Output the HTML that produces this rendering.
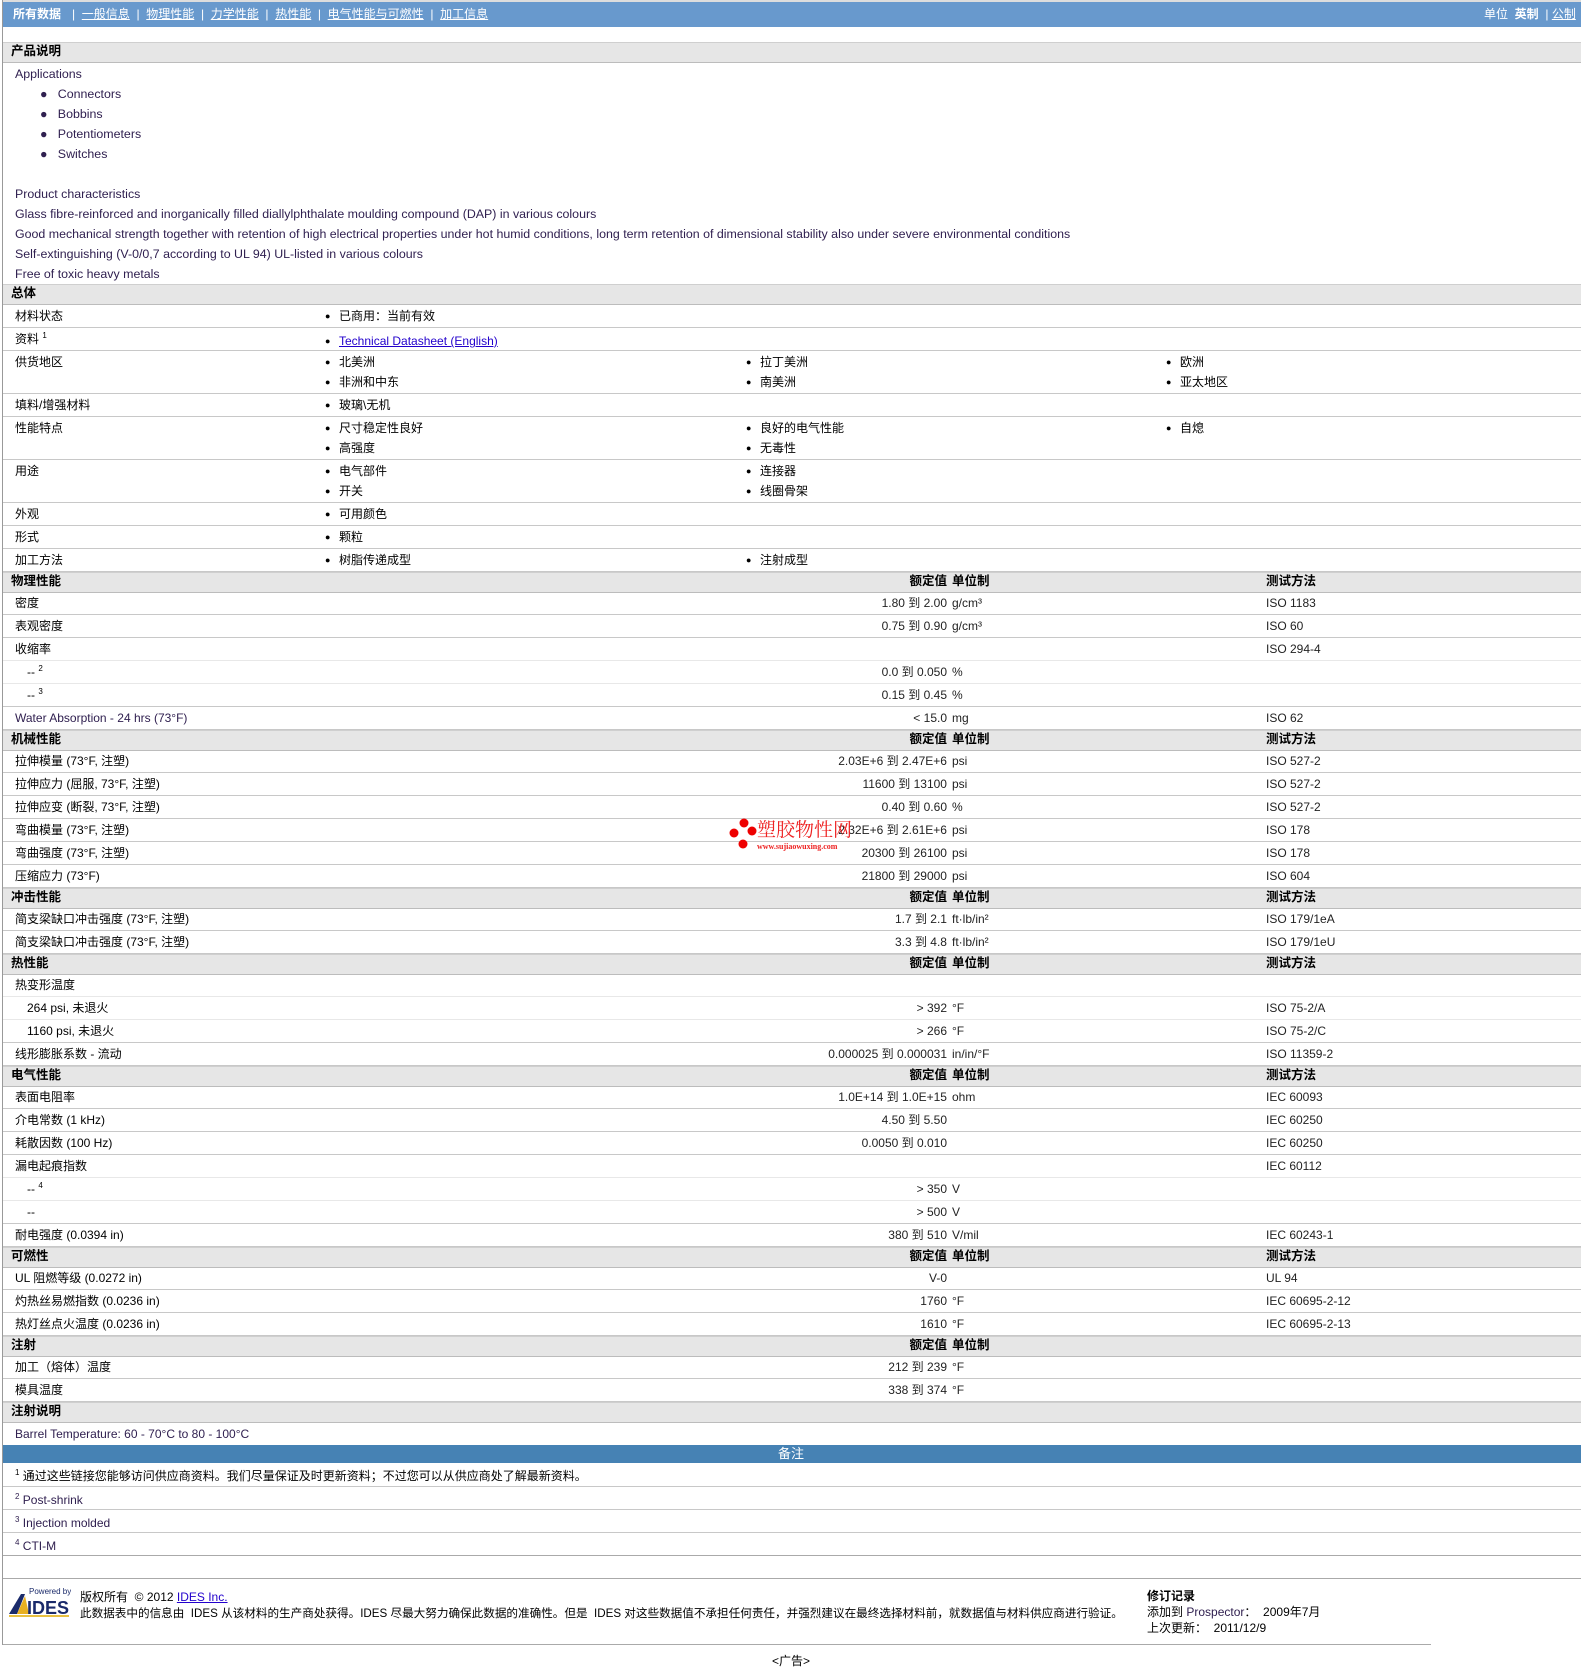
<!DOCTYPE html>
<html><head><meta charset="utf-8"><style>
body{margin:0;width:1581px;height:1671px;background:#fff;position:relative;overflow:hidden;font-family:"Liberation Sans","Noto Sans CJK SC",sans-serif;font-size:12px;line-height:15px;color:#000}
div,span{position:absolute;white-space:nowrap;line-height:15px}
.r{left:3px;right:0;border-bottom:1px solid #c8c8c8}
.s{border-bottom-color:#e8e8e8}
.h{left:3px;right:0;height:19px;background:#e6e6e6;border-top:1px solid #cfcfcf;border-bottom:1px solid #bcbcbc;font-weight:bold;font-size:12.5px}
.h span{top:1px}
.l{left:12px;top:4px}
.i{left:24px;top:4px}
.v{right:634px;top:4px;color:#222}
.u{left:949px;top:4px;color:#222}
.m{left:1263px;top:4px;color:#222}
.b2,.b3,.b4{font-size:9px}
.b2{left:322px}.t2{left:336px}.b3{left:743px}.t3{left:757px}.b4{left:1163px}.t4{left:1177px}
.p{color:#302050}
.d{font-size:12.4px}
sup{font-size:8px;line-height:0}
a{color:#2200cc}
</style></head><body>
<div style="left:3px;top:0;width:1578px;height:2px;background:#ddd"></div>
<div style="left:3px;top:2px;right:0;height:25px;background:#6899cd;color:#fff;font-size:12px">
<span style="left:10px;top:5px;font-weight:bold">所有数据</span>
<span style="left:69px;top:5px">|&nbsp; <u>一般信息</u> &nbsp;| &nbsp;<u>物理性能</u> &nbsp;| &nbsp;<u>力学性能</u> &nbsp;| &nbsp;<u>热性能</u> &nbsp;| &nbsp;<u>电气性能与可燃性</u> &nbsp;| &nbsp;<u>加工信息</u></span>
<span style="left:1481px;top:5px">单位 &nbsp;<b>英制</b> &nbsp;| <u>公制</u></span></div>
<div style="left:2px;top:0;width:1px;height:1645px;background:#999"></div>

<div class="h" style="top:42px"><span style="left:8px">产品说明</span></div>
<div class="p d" style="left:15px;top:67px">Applications</div>
<div class="p d" style="left:40px;top:87px">●&nbsp;&nbsp; Connectors</div>
<div class="p d" style="left:40px;top:107px">●&nbsp;&nbsp; Bobbins</div>
<div class="p d" style="left:40px;top:127px">●&nbsp;&nbsp; Potentiometers</div>
<div class="p d" style="left:40px;top:147px">●&nbsp;&nbsp; Switches</div>
<div class="p d" style="left:15px;top:187px">Product characteristics</div>
<div class="p d" style="left:15px;top:207px">Glass fibre-reinforced and inorganically filled diallylphthalate moulding compound (DAP) in various colours</div>
<div class="p d" style="left:15px;top:227px">Good mechanical strength together with retention of high electrical properties under hot humid conditions, long term retention of dimensional stability also under severe environmental conditions</div>
<div class="p d" style="left:15px;top:247px">Self-extinguishing (V-0/0,7 according to UL 94) UL-listed in various colours</div>
<div class="p d" style="left:15px;top:267px">Free of toxic heavy metals</div>

<div class="h" style="top:284px"><span style="left:8px">总体</span></div>
<div class="r" style="top:305px;height:22px"><span class="l">材料状态</span><span class="b2" style="top:4px">●</span><span class="t2" style="top:4px">已商用：当前有效</span></div>
<div class="r" style="top:328px;height:22px"><span class="l">资料 <sup>1</sup></span><span class="b2" style="top:6px">●</span><span class="t2" style="top:6px"><a><u>Technical Datasheet (English)</u></a></span></div>
<div class="r" style="top:351px;height:42px"><span class="l">供货地区</span><span class="b2" style="top:4px">●</span><span class="t2" style="top:4px">北美洲</span><span class="b3" style="top:4px">●</span><span class="t3" style="top:4px">拉丁美洲</span><span class="b4" style="top:4px">●</span><span class="t4" style="top:4px">欧洲</span><span class="b2" style="top:24px">●</span><span class="t2" style="top:24px">非洲和中东</span><span class="b3" style="top:24px">●</span><span class="t3" style="top:24px">南美洲</span><span class="b4" style="top:24px">●</span><span class="t4" style="top:24px">亚太地区</span></div>
<div class="r" style="top:394px;height:22px"><span class="l">填料/增强材料</span><span class="b2" style="top:4px">●</span><span class="t2" style="top:4px">玻璃\无机</span></div>
<div class="r" style="top:417px;height:42px"><span class="l">性能特点</span><span class="b2" style="top:4px">●</span><span class="t2" style="top:4px">尺寸稳定性良好</span><span class="b3" style="top:4px">●</span><span class="t3" style="top:4px">良好的电气性能</span><span class="b4" style="top:4px">●</span><span class="t4" style="top:4px">自熄</span><span class="b2" style="top:24px">●</span><span class="t2" style="top:24px">高强度</span><span class="b3" style="top:24px">●</span><span class="t3" style="top:24px">无毒性</span></div>
<div class="r" style="top:460px;height:42px"><span class="l">用途</span><span class="b2" style="top:4px">●</span><span class="t2" style="top:4px">电气部件</span><span class="b3" style="top:4px">●</span><span class="t3" style="top:4px">连接器</span><span class="b2" style="top:24px">●</span><span class="t2" style="top:24px">开关</span><span class="b3" style="top:24px">●</span><span class="t3" style="top:24px">线圈骨架</span></div>
<div class="r" style="top:503px;height:22px"><span class="l">外观</span><span class="b2" style="top:4px">●</span><span class="t2" style="top:4px">可用颜色</span></div>
<div class="r" style="top:526px;height:22px"><span class="l">形式</span><span class="b2" style="top:4px">●</span><span class="t2" style="top:4px">颗粒</span></div>
<div class="r" style="top:549px;height:22px"><span class="l">加工方法</span><span class="b2" style="top:4px">●</span><span class="t2" style="top:4px">树脂传递成型</span><span class="b3" style="top:4px">●</span><span class="t3" style="top:4px">注射成型</span></div>

<div class="h" style="top:572px"><span style="left:8px">物理性能</span><span style="right:634px">额定值</span><span style="left:949px">单位制</span><span style="left:1263px">测试方法</span></div>
<div class="r" style="top:592px;height:22px"><span class="l">密度</span><span class="v">1.80 到 2.00</span><span class="u">g/cm³</span><span class="m">ISO 1183</span></div>
<div class="r" style="top:615px;height:22px"><span class="l">表观密度</span><span class="v">0.75 到 0.90</span><span class="u">g/cm³</span><span class="m">ISO 60</span></div>
<div class="r s" style="top:638px;height:22px"><span class="l">收缩率</span><span class="m">ISO 294-4</span></div>
<div class="r s" style="top:661px;height:22px"><span class="i">-- <sup>2</sup></span><span class="v">0.0 到 0.050</span><span class="u">%</span></div>
<div class="r" style="top:684px;height:22px"><span class="i">-- <sup>3</sup></span><span class="v">0.15 到 0.45</span><span class="u">%</span></div>
<div class="r" style="top:707px;height:22px"><span class="l p">Water Absorption - 24 hrs (73°F)</span><span class="v">&lt; 15.0</span><span class="u">mg</span><span class="m">ISO 62</span></div>

<div class="h" style="top:730px"><span style="left:8px">机械性能</span><span style="right:634px">额定值</span><span style="left:949px">单位制</span><span style="left:1263px">测试方法</span></div>
<div class="r" style="top:750px;height:22px"><span class="l">拉伸模量 (73°F, 注塑)</span><span class="v">2.03E+6 到 2.47E+6</span><span class="u">psi</span><span class="m">ISO 527-2</span></div>
<div class="r" style="top:773px;height:22px"><span class="l">拉伸应力 (屈服, 73°F, 注塑)</span><span class="v">11600 到 13100</span><span class="u">psi</span><span class="m">ISO 527-2</span></div>
<div class="r" style="top:796px;height:22px"><span class="l">拉伸应变 (断裂, 73°F, 注塑)</span><span class="v">0.40 到 0.60</span><span class="u">%</span><span class="m">ISO 527-2</span></div>
<div class="r" style="top:819px;height:22px"><span class="l">弯曲模量 (73°F, 注塑)</span><span class="v">2.32E+6 到 2.61E+6</span><span class="u">psi</span><span class="m">ISO 178</span></div>
<div class="r" style="top:842px;height:22px"><span class="l">弯曲强度 (73°F, 注塑)</span><span class="v">20300 到 26100</span><span class="u">psi</span><span class="m">ISO 178</span></div>
<div class="r" style="top:865px;height:22px"><span class="l">压缩应力 (73°F)</span><span class="v">21800 到 29000</span><span class="u">psi</span><span class="m">ISO 604</span></div>

<div class="h" style="top:888px"><span style="left:8px">冲击性能</span><span style="right:634px">额定值</span><span style="left:949px">单位制</span><span style="left:1263px">测试方法</span></div>
<div class="r" style="top:908px;height:22px"><span class="l">简支梁缺口冲击强度 (73°F, 注塑)</span><span class="v">1.7 到 2.1</span><span class="u">ft·lb/in²</span><span class="m">ISO 179/1eA</span></div>
<div class="r" style="top:931px;height:22px"><span class="l">简支梁缺口冲击强度 (73°F, 注塑)</span><span class="v">3.3 到 4.8</span><span class="u">ft·lb/in²</span><span class="m">ISO 179/1eU</span></div>

<div class="h" style="top:954px"><span style="left:8px">热性能</span><span style="right:634px">额定值</span><span style="left:949px">单位制</span><span style="left:1263px">测试方法</span></div>
<div class="r s" style="top:974px;height:22px"><span class="l">热变形温度</span></div>
<div class="r s" style="top:997px;height:22px"><span class="i">264 psi, 未退火</span><span class="v">&gt; 392</span><span class="u">°F</span><span class="m">ISO 75-2/A</span></div>
<div class="r" style="top:1020px;height:22px"><span class="i">1160 psi, 未退火</span><span class="v">&gt; 266</span><span class="u">°F</span><span class="m">ISO 75-2/C</span></div>
<div class="r" style="top:1043px;height:22px"><span class="l">线形膨胀系数 - 流动</span><span class="v">0.000025 到 0.000031</span><span class="u">in/in/°F</span><span class="m">ISO 11359-2</span></div>

<div class="h" style="top:1066px"><span style="left:8px">电气性能</span><span style="right:634px">额定值</span><span style="left:949px">单位制</span><span style="left:1263px">测试方法</span></div>
<div class="r" style="top:1086px;height:22px"><span class="l">表面电阻率</span><span class="v">1.0E+14 到 1.0E+15</span><span class="u">ohm</span><span class="m">IEC 60093</span></div>
<div class="r" style="top:1109px;height:22px"><span class="l">介电常数 (1 kHz)</span><span class="v">4.50 到 5.50</span><span class="m">IEC 60250</span></div>
<div class="r" style="top:1132px;height:22px"><span class="l">耗散因数 (100 Hz)</span><span class="v">0.0050 到 0.010</span><span class="m">IEC 60250</span></div>
<div class="r s" style="top:1155px;height:22px"><span class="l">漏电起痕指数</span><span class="m">IEC 60112</span></div>
<div class="r s" style="top:1178px;height:22px"><span class="i">-- <sup>4</sup></span><span class="v">&gt; 350</span><span class="u">V</span></div>
<div class="r" style="top:1201px;height:22px"><span class="i">--</span><span class="v">&gt; 500</span><span class="u">V</span></div>
<div class="r" style="top:1224px;height:22px"><span class="l">耐电强度 (0.0394 in)</span><span class="v">380 到 510</span><span class="u">V/mil</span><span class="m">IEC 60243-1</span></div>

<div class="h" style="top:1247px"><span style="left:8px">可燃性</span><span style="right:634px">额定值</span><span style="left:949px">单位制</span><span style="left:1263px">测试方法</span></div>
<div class="r" style="top:1267px;height:22px"><span class="l">UL 阻燃等级 (0.0272 in)</span><span class="v">V-0</span><span class="m">UL 94</span></div>
<div class="r" style="top:1290px;height:22px"><span class="l">灼热丝易燃指数 (0.0236 in)</span><span class="v">1760</span><span class="u">°F</span><span class="m">IEC 60695-2-12</span></div>
<div class="r" style="top:1313px;height:22px"><span class="l">热灯丝点火温度 (0.0236 in)</span><span class="v">1610</span><span class="u">°F</span><span class="m">IEC 60695-2-13</span></div>

<div class="h" style="top:1336px"><span style="left:8px">注射</span><span style="right:634px">额定值</span><span style="left:949px">单位制</span></div>
<div class="r" style="top:1356px;height:22px"><span class="l">加工（熔体）温度</span><span class="v">212 到 239</span><span class="u">°F</span></div>
<div class="r" style="top:1379px;height:22px"><span class="l">模具温度</span><span class="v">338 到 374</span><span class="u">°F</span></div>

<div class="h" style="top:1402px"><span style="left:8px">注射说明</span></div>
<div style="left:3px;right:0;top:1422px;height:23px"><span class="l p" style="top:5px">Barrel Temperature: 60 - 70°C to 80 - 100°C</span></div>
<div style="left:3px;right:0;top:1445px;height:18px;background:#4682b4;color:#fff;font-size:13px"><span style="left:775px;top:1px">备注</span></div>
<div class="r" style="top:1463px;height:23px"><span class="l" style="top:6px"><sup>1</sup> 通过这些链接您能够访问供应商资料。我们尽量保证及时更新资料；不过您可以从供应商处了解最新资料。</span></div>
<div class="r" style="top:1487px;height:22px"><span class="l p" style="top:6px"><sup>2</sup> Post-shrink</span></div>
<div class="r" style="top:1510px;height:22px"><span class="l p" style="top:6px"><sup>3</sup> Injection molded</span></div>
<div class="r" style="top:1533px;height:22px;border-bottom-color:#aaa"><span class="l p" style="top:6px"><sup>4</sup> CTI-M</span></div>
<div style="left:3px;right:0;top:1578px;height:1px;background:#aaa"></div>

<svg style="position:absolute;left:7px;top:1586px" width="64" height="32" viewBox="0 0 64 32"><text x="22" y="8" font-size="8" fill="#1a2a6a" font-family="Liberation Sans">Powered by</text><polygon points="2,28 14,8 18,8 10,28" fill="#1a2a6a"/><polygon points="10,28 18,10 22,28" fill="#e8b020"/><text x="20" y="28" font-size="18" font-weight="bold" fill="#1a2a6a" font-family="Liberation Sans">IDES</text><rect x="2" y="29" width="60" height="2" fill="#e8c040"/></svg>
<div style="left:80px;top:1590px">版权所有 &nbsp;© 2012 <a><u>IDES Inc.</u></a></div>
<div style="left:80px;top:1606px;font-size:11.6px">此数据表中的信息由 &nbsp;IDES 从该材料的生产商处获得。IDES 尽最大努力确保此数据的准确性。但是 &nbsp;IDES 对这些数据值不承担任何责任，并强烈建议在最终选择材料前，就数据值与材料供应商进行验证。</div>
<div style="left:1147px;top:1589px;font-weight:bold">修订记录</div>
<div style="left:1147px;top:1605px">添加到 <span style="position:static;color:#302050">Prospector</span>： &nbsp;2009年7月</div>
<div style="left:1147px;top:1621px">上次更新： &nbsp;2011/12/9</div>
<div style="left:3px;width:1428px;top:1644px;height:1px;background:#aaa"></div>
<div style="left:772px;top:1654px">&lt;广告&gt;</div>

<div style="left:728px;top:818px;width:130px;height:36px">
<svg style="position:absolute;left:0;top:0" width="30" height="36"><circle cx="16" cy="5" r="4.5" fill="#e00"/><circle cx="6" cy="15" r="4.5" fill="#e00"/><circle cx="24" cy="13" r="4.5" fill="#e00"/><circle cx="15" cy="26" r="4.5" fill="#e00"/></svg>
<span style="left:29px;top:0;font-size:19px;line-height:22px;color:#e22;font-family:'Noto Serif CJK SC',serif">塑胶物性网</span>
<span style="left:29px;top:24px;font-size:8px;line-height:10px;color:#e22;font-family:'Liberation Serif',serif;font-weight:bold">www.sujiaowuxing.com</span></div>
</body></html>
